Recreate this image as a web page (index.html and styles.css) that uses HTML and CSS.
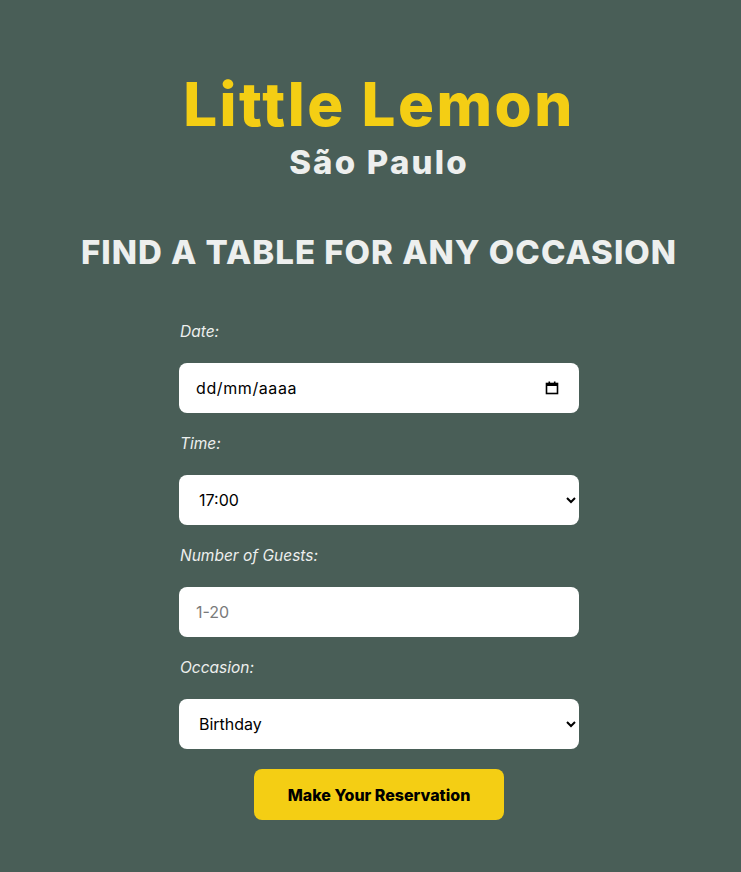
FILE: index.html
```html
<!DOCTYPE html>
<html lang="pt-BR">
<head>
<meta charset="utf-8">
<title>Little Lemon - Reserve a Table</title>
<link rel="stylesheet" href="styles.css">
</head>
<body>
<main class="booking">
  <header class="booking-header">
    <h1 class="brand">Little Lemon</h1>
    <h2 class="city">São Paulo</h2>
    <h3 class="tagline">Find a table for any occasion</h3>
  </header>
  <form class="booking-form">
    <label class="form-label" for="res-date">Date:</label>
    <div class="field date-field">
      <input class="date-input" id="res-date" type="text" value="dd/mm/aaaa">
      <svg class="cal-icon" width="14" height="14" viewBox="0 0 14 14" aria-hidden="true">
        <rect x="1.5" y="2.5" width="11" height="10" fill="none" stroke="#000" stroke-width="1.6"/>
        <rect x="1.5" y="2.5" width="11" height="2.5" fill="#000"/>
        <rect x="3.5" y="0.5" width="1.6" height="3" fill="#000"/>
        <rect x="8.9" y="0.5" width="1.6" height="3" fill="#000"/>
      </svg>
    </div>
    <label class="form-label" for="res-time">Time:</label>
    <select class="field select-field" id="res-time">
      <option>17:00</option>
      <option>18:00</option>
      <option>19:00</option>
      <option>20:00</option>
      <option>21:00</option>
      <option>22:00</option>
    </select>
    <label class="form-label" for="guests">Number of Guests:</label>
    <input class="field" id="guests" type="number" min="1" max="20" placeholder="1-20">
    <label class="form-label" for="occasion">Occasion:</label>
    <select class="field select-field" id="occasion">
      <option>Birthday</option>
      <option>Anniversary</option>
    </select>
    <button class="submit-btn" type="submit">Make Your Reservation</button>
  </form>
</main>
</body>
</html>
```
FILE: styles.css
```css
* { box-sizing: border-box; }

html, body {
  margin: 0;
  background: #495E57;
}

body {
  font-family: "Inter", "Roboto", "Liberation Sans", sans-serif;
  color: #EDEFEE;
  min-height: 872px;
}

.booking {
  display: flex;
  flex-direction: column;
  align-items: center;
  padding-top: 74px;
  padding-left: 17px;
}

.booking-header {
  display: flex;
  flex-direction: column;
  align-items: center;
}

.brand {
  margin: 0;
  font-size: 60px;
  line-height: 60px;
  font-weight: 800;
  color: #F4CE14;
  letter-spacing: 2.5px;
}

.city {
  margin: 8px 0 0;
  font-size: 33px;
  line-height: 40px;
  font-weight: 800;
  color: #EDEFEE;
  letter-spacing: 2.2px;
}

.tagline {
  margin: 48px 0 0;
  font-size: 33px;
  line-height: 44px;
  font-weight: 800;
  text-transform: uppercase;
  color: #EDEFEE;
  letter-spacing: 1px;
}

.booking-form {
  width: 400px;
  margin-top: 47px;
  display: grid;
  gap: 20px;
}

.form-label {
  font-size: 15.5px;
  line-height: 22px;
  font-style: italic;
  color: #EDEFEE;
  padding-left: 1px;
}

.field {
  width: 100%;
  height: 50px;
  border: none;
  border-radius: 8px;
  background: #FFFFFF;
  padding: 0 16px 0 17px;
  font-family: inherit;
  font-size: 16px;
  color: #000;
}

.field::placeholder { color: #7a7a7a; }

.select-field {
  padding-left: 16px;
}

.date-field {
  display: flex;
  align-items: center;
  padding-right: 20px;
}

.date-input {
  flex: 1;
  border: none;
  outline: none;
  background: transparent;
  font-family: inherit;
  font-size: 16px;
  color: #000;
  padding: 0;
  letter-spacing: 0.6px;
}

.cal-icon { flex: none; }

.submit-btn {
  justify-self: center;
  width: 250px;
  height: 51px;
  border: none;
  border-radius: 8px;
  background: #F4CE14;
  color: #000;
  font-family: inherit;
  font-size: 16px;
  font-weight: 800;
}
```
